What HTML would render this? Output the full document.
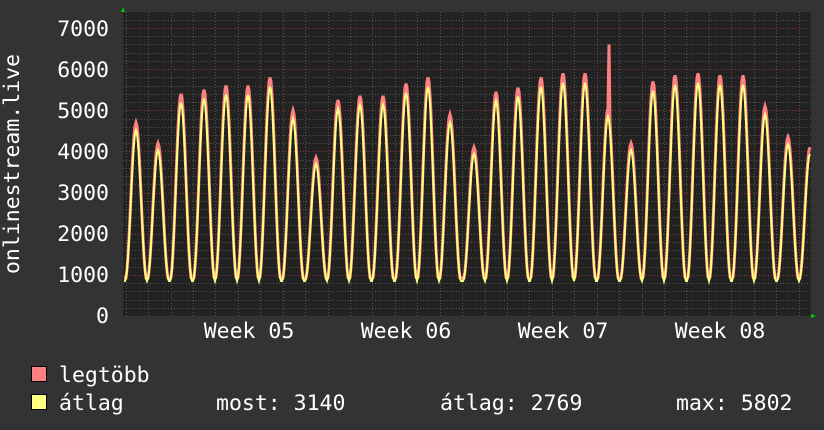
<!DOCTYPE html>
<html><head><meta charset="utf-8"><style>
body{margin:0;background:#333;width:824px;height:430px;overflow:hidden}
svg{display:block}
text{font-family:"DejaVu Sans Mono","Liberation Mono",monospace;fill:#fff;font-size:21.5px}
</style></head><body>
<svg id="s" width="824" height="430" xmlns="http://www.w3.org/2000/svg">
<rect width="824" height="430" fill="#333"/>
<rect x="123" y="12" width="688" height="304" fill="#222"/>
<g id="grid"></g>
<g id="data"></g>
<polygon points="121,12 125,12 123,7" fill="#0c0"/>
<polygon points="811,314 811,318 816,316" fill="#0c0"/>
<g text-anchor="end">
<text x="109" y="36">7000</text><text x="109" y="77">6000</text><text x="109" y="118">5000</text>
<text x="109" y="159">4000</text><text x="109" y="200">3000</text><text x="109" y="241">2000</text>
<text x="109" y="282">1000</text><text x="109" y="323">0</text>
</g>
<g text-anchor="middle">
<text x="249" y="338">Week 05</text><text x="406" y="338">Week 06</text>
<text x="563" y="338">Week 07</text><text x="720" y="338">Week 08</text>
</g>
<text transform="translate(19,164) rotate(-90)" text-anchor="middle">onlinestream.live</text>
<rect x="31.5" y="366.5" width="15" height="15" fill="#ff8080" stroke="#000"/>
<rect x="31.5" y="394.5" width="15" height="15" fill="#ffff80" stroke="#000"/>
<text x="59" y="382">legtöbb</text>
<text x="59" y="410">átlag</text>
<text x="216" y="410">most: 3140</text>
<text x="440" y="410">átlag: 2769</text>
<text x="676" y="410">max: 5802</text>
</svg>
<script>
var ns="http://www.w3.org/2000/svg",g=document.getElementById('grid'),d=document.getElementById('data');
function ln(x1,y1,x2,y2,c){var l=document.createElementNS(ns,'line');l.setAttribute('x1',x1);l.setAttribute('y1',y1);l.setAttribute('x2',x2);l.setAttribute('y2',y2);l.setAttribute('stroke',c);l.setAttribute('stroke-dasharray','1,2');g.appendChild(l);}
function Y(v){return 316-v*0.04114;}
for(var v=200;v<=7200;v+=200){var y=Math.round(Y(v))+.5;if(y<12)continue;ln(123,y,811,y,v%1000==0?'#8a3a3a':'#555');}
for(var i=0;i<32;i++){var x=Math.round(170.5+(i-2)*22.43)+.5;if(x<124||x>810)continue;var maj=((i-2)%7+7)%7==0;ln(x,12,x,316,maj?'#8a3a3a':'#555');}
var pk=[[136,4700],[158,4200],[181,5400],[204,5500],[226,5600],[248,5600],[270,5800],[293,5000],[316,3850],[338,5250],[360,5350],[383,5350],[406,5650],[428,5800],[450,4900],[474,4100],[496,5450],[518,5550],[541,5800],[563,5900],[585,5900],[608,5050],[631,4200],[653,5700],[675,5850],[698,5900],[720,5850],[743,5850],[765,5100],[788,4350],[810,4100]];
function val(x,scale){var best=0;for(var k=0;k<pk.length;k++){var dx=(x-pk[k][0])/11.2;if(Math.abs(dx)>1)continue;var c=Math.cos(dx*Math.PI/2);var f=Math.pow(c,2.2);var base=850;var v=base+(pk[k][1]*scale-base)*f;best=Math.max(best,v);}return Math.max(best,850+ (scale>0.98?80:0));}
function path(scale,col,w){var s='';for(var x=124;x<=810;x++){var v=val(x,scale);if(scale>0.98&&x==609)v=6600;s+=(x==124?'M':'L')+x+','+Y(v).toFixed(1);}var p=document.createElementNS(ns,'path');p.setAttribute('d',s);p.setAttribute('fill','none');p.setAttribute('stroke',col);p.setAttribute('stroke-width',w);d.appendChild(p);}
path(1.0,'#ff8080',3);path(0.96,'#ffff80',2);
</script>
</body></html>
